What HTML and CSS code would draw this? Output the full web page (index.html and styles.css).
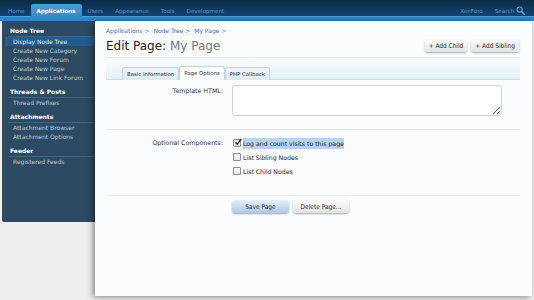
FILE: index.html
```html
<!DOCTYPE html>
<html lang="en">
<head>
    <meta charset="UTF-8">
    <meta name="viewport" content="width=device-width, initial-scale=1.0">
    <title>Edit Page: My Page</title>
    <link rel="stylesheet" href="styles.css">
</head>
<body>
<header class="topbar">
    <ul class="nav">
        <li class="nav-item">Home</li>
        <li class="nav-item active">Applications</li>
        <li class="nav-item">Users</li>
        <li class="nav-item">Appearance</li>
        <li class="nav-item">Tools</li>
        <li class="nav-item">Development</li>
    </ul>
    <div class="nav-right">
        <span class="nav-item">XenForo</span>
        <span class="nav-item search">Search
            <svg class="search-icon" width="9" height="9" viewBox="0 0 9 9">
                <circle cx="3.6" cy="3.6" r="2.6" fill="none" stroke="#6aa4d6" stroke-width="1.1"/>
                <line x1="5.5" y1="5.5" x2="8.3" y2="8.3" stroke="#6aa4d6" stroke-width="1.6" stroke-linecap="round"/>
            </svg>
        </span>
    </div>
</header>

<div class="layout">
    <aside class="sidebar">
        <div class="side-group">
            <div class="side-heading">Node Tree</div>
            <div class="side-link selected">Display Node Tree</div>
            <div class="side-link">Create New Category</div>
            <div class="side-link">Create New Forum</div>
            <div class="side-link">Create New Page</div>
            <div class="side-link">Create New Link Forum</div>
        </div>
        <div class="side-group">
            <div class="side-heading">Threads &amp; Posts</div>
            <div class="side-link">Thread Prefixes</div>
        </div>
        <div class="side-group">
            <div class="side-heading">Attachments</div>
            <div class="side-link">Attachment Browser</div>
            <div class="side-link">Attachment Options</div>
        </div>
        <div class="side-group">
            <div class="side-heading">Feeder</div>
            <div class="side-link">Registered Feeds</div>
        </div>
    </aside>

    <main class="panel">
        <div class="breadcrumb">Applications &gt; &nbsp;Node Tree &gt; &nbsp;My Page &gt;</div>
        <div class="title-row">
            <h1 class="title">Edit Page: <span class="title-name">My Page</span></h1>
            <div class="top-buttons">
                <button class="btn">+ Add Child</button>
                <button class="btn">+ Add Sibling</button>
            </div>
        </div>

        <div class="tabbar">
            <span class="tab">Basic Information</span>
            <span class="tab active">Page Options</span>
            <span class="tab">PHP Callback</span>
        </div>

        <div class="form-row template-row">
            <label class="form-label">Template HTML:</label>
            <textarea class="textarea"></textarea>
        </div>

        <div class="form-row options-row">
            <div class="form-label">Optional Components:</div>
            <div class="options">
                <div class="option">
                    <span class="check">
                        <svg width="8" height="8" viewBox="0 0 8 8">
                            <path d="M1.5 4.2 L3.2 6.2 L7.2 0.8" fill="none" stroke="#222" stroke-width="1.4"/>
                        </svg>
                    </span>
                    <span class="highlight">Log and count visits to this page</span>
                </div>
                <div class="option">
                    <span class="check"></span>
                    <span>List Sibling Nodes</span>
                </div>
                <div class="option">
                    <span class="check"></span>
                    <span>List Child Nodes</span>
                </div>
            </div>
        </div>

        <div class="submit-row">
            <button class="btn primary">Save Page</button>
            <button class="btn">Delete Page...</button>
        </div>
    </main>
</div>
</body>
</html>
```

FILE: styles.css
```css
body {
    margin: 0;
    height: 300px;
    overflow: hidden;
    background: #eeeeee;
    font-family: 'DejaVu Sans', sans-serif;
    font-size: 6px;
    color: #333;
}

/* top navigation */

.topbar {
    display: flex;
    justify-content: space-between;
    height: 21px;
    background: linear-gradient(to bottom, #0a2a45 0, #124572 16px, #4d9edb 16px, #4d9edb 17px, #3482c1 17px, #3482c1 21px);
}

.nav {
    display: flex;
    list-style: none;
    margin: 4px 0 0;
    padding: 0 0 0 2px;
}

.nav-item {
    height: 17px;
    padding: 0 6px;
    line-height: 14px;
    font-size: 5.6px;
    color: #5f97c6;
}

.nav-item.active {
    padding: 0 6px;
    border-radius: 2px 2px 0 0;
    background: linear-gradient(to bottom, #4a9bd8, #3482c1);
    color: #fff;
    font-weight: bold;
}

.nav-right {
    display: flex;
    margin: 4px 9px 0 0;
}

.nav-right .nav-item {
    padding: 0 0 0 12px;
}

.search {
    display: flex;
    align-items: flex-start;
    gap: 2px;
}

.search-icon {
    margin-top: 2px;
}

/* sidebar + panel */

.layout {
    display: flex;
    align-items: flex-start;
}

.sidebar {
    width: 93px;
    height: 196px;
    margin-left: 2px;
    padding-top: 5px;
    background: #2c4a62;
    border-radius: 0 0 0 2px;
}

.side-group {
    margin-bottom: 5px;
}

.side-heading {
    margin-left: 6px;
    padding-left: 2px;
    line-height: 10px;
    border-bottom: 1px solid #3f6687;
    color: #fff;
    font-weight: bold;
}

.side-link {
    margin-left: 3px;
    padding-left: 8px;
    line-height: 9px;
    color: #bfd0df;
}

.side-link.selected {
    background: #215c8c;
    color: #e4eef7;
}

.panel {
    width: 414px;
    height: 270px;
    padding: 5px 12px 0 11px;
    background: #fbfcfe;
    box-shadow: -2px 1px 6px rgba(0, 0, 0, 0.45);
}

.breadcrumb {
    line-height: 10px;
    color: #3a72a6;
}

.title-row {
    display: flex;
    justify-content: space-between;
    align-items: center;
    margin-top: 2px;
    padding-bottom: 3px;
    border-bottom: 1px solid #e3e8ee;
}

.title {
    margin: 0;
    font-size: 12px;
    line-height: 16px;
    font-weight: normal;
    color: #1e1e1e;
}

.title-name {
    color: #777;
}

.top-buttons {
    display: flex;
    gap: 4px;
    margin-right: 1px;
}

.btn {
    height: 12px;
    padding: 0 4px;
    border: none;
    border-radius: 3px;
    background: linear-gradient(to bottom, #fdfdfd, #e2e2e2);
    box-shadow: 0 1px 2px rgba(0, 0, 0, 0.35);
    font-family: 'DejaVu Sans Condensed', 'DejaVu Sans', sans-serif;
    font-size: 6.5px;
    color: #2a2a2a;
}

.btn.primary {
    background: linear-gradient(to bottom, #e6f0f9, #abcbe7);
}

/* tabs */

.tabbar {
    display: flex;
    align-items: flex-end;
    height: 21px;
    padding-left: 16px;
    background: linear-gradient(to bottom, #fbfdfe, #e2eff7);
    border-bottom: 1px solid #c9dbe8;
}

.tab {
    height: 12px;
    margin-bottom: -1px;
    padding: 0 4px;
    line-height: 13px;
    border: 1px solid #c3d3df;
    border-bottom: none;
    border-radius: 3px 3px 0 0;
    background: linear-gradient(to bottom, #eef5fa, #dde9f2);
    font-size: 5.4px;
    color: #333;
}

.tab.active {
    height: 13px;
    background: #fbfcfe;
}

/* form */

.form-row {
    display: grid;
    grid-template-columns: 117px 1fr;
    column-gap: 9px;
    border-bottom: 1px solid #e6ebf0;
}

.form-label {
    text-align: right;
    line-height: 10px;
    font-size: 6.3px;
    color: #333;
}

.template-row {
    padding: 5px 0 13px;
}

.template-row .form-label {
    padding-top: 1px;
}

.textarea {
    width: 270px;
    height: 31px;
    box-sizing: border-box;
    margin: 0;
    border: 1px solid #d2d2d2;
    border-radius: 3px;
    background: #fff;
    resize: vertical;
}

.options-row {
    padding: 6px 0 17px;
}

.options-row .form-label {
    line-height: 14px;
}

.option {
    display: flex;
    align-items: center;
    gap: 2px;
    height: 14px;
    font-size: 6.2px;
    color: #222;
}

.check {
    width: 6px;
    height: 6px;
    margin-left: 1px;
    border: 1px solid #8c8c8c;
    border-radius: 1px;
    background: linear-gradient(to bottom, #fff, #e4e4e4);
    position: relative;
}

.check svg {
    position: absolute;
    left: 0;
    top: -2px;
}

.highlight {
    padding: 2px 0;
    background: #b6d4f2;
}

.submit-row {
    display: flex;
    gap: 4px;
    padding: 4px 0 0 126px;
}

.submit-row .btn {
    height: 13px;
}

.submit-row .btn.primary {
    width: 57px;
}

.submit-row .btn:not(.primary) {
    width: 56px;
}
```
